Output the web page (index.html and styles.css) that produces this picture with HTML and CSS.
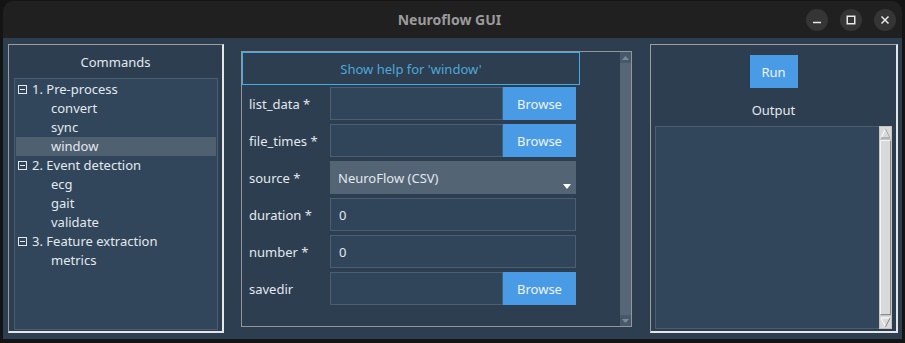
FILE: index.html
```html
<!DOCTYPE html>
<html>
<head>
<meta charset="utf-8">
<title>Neuroflow GUI</title>
<link rel="stylesheet" href="styles.css">
</head>
<body>
<div class="window">
  <div class="titlebar">
    <div></div>
    <div class="title">Neuroflow GUI</div>
    <div class="controls">
      <span class="ctl"><svg width="10" height="10" viewBox="0 0 10 10"><path d="M1 7.5h8" stroke="#e8e8e8" stroke-width="1.5"/></svg></span>
      <span class="ctl"><svg width="10" height="10" viewBox="0 0 10 10"><rect x="1.25" y="1.25" width="7.5" height="7.5" fill="none" stroke="#e8e8e8" stroke-width="1.5"/></svg></span>
      <span class="ctl"><svg width="10" height="10" viewBox="0 0 10 10"><path d="M1.5 1.5l7 7M8.5 1.5l-7 7" stroke="#e8e8e8" stroke-width="1.5"/></svg></span>
    </div>
  </div>
  <div class="content">
    <div class="panel left">
      <div class="panel-title">Commands</div>
      <div class="tree">
        <div class="row group"><span class="minus"></span>1. Pre-process</div>
        <div class="row child">convert</div>
        <div class="row child">sync</div>
        <div class="row child selected">window</div>
        <div class="row group"><span class="minus"></span>2. Event detection</div>
        <div class="row child">ecg</div>
        <div class="row child">gait</div>
        <div class="row child">validate</div>
        <div class="row group"><span class="minus"></span>3. Feature extraction</div>
        <div class="row child">metrics</div>
      </div>
    </div>

    <div class="middle">
      <div class="form-area">
        <div class="help">Show help for 'window'</div>
        <div class="fields">
          <div class="field"><span class="label">list_data *</span><span class="input short"></span><span class="browse">Browse</span></div>
          <div class="field"><span class="label">file_times *</span><span class="input short"></span><span class="browse">Browse</span></div>
          <div class="field"><span class="label">source *</span><span class="combo">NeuroFlow (CSV)<svg class="caret" width="8" height="5" viewBox="0 0 8 5"><path d="M0 0h8L4 5z" fill="#ffffff"/></svg></span></div>
          <div class="field"><span class="label">duration *</span><span class="input long">0</span></div>
          <div class="field"><span class="label">number *</span><span class="input long">0</span></div>
          <div class="field"><span class="label">savedir</span><span class="input short"></span><span class="browse">Browse</span></div>
        </div>
      </div>
      <div class="vscroll">
        <div class="vs-arrow"><svg width="7" height="4" viewBox="0 0 7 4"><path d="M0 4L3.5 0L7 4z" fill="#7a8a99"/></svg></div>
        <div class="vs-thumb"></div>
        <div class="vs-arrow"><svg width="7" height="4" viewBox="0 0 7 4"><path d="M0 0h7L3.5 4z" fill="#7a8a99"/></svg></div>
      </div>
    </div>

    <div class="panel right">
      <div class="run">Run</div>
      <div class="output-label">Output</div>
      <div class="output">
        <div class="out-text"></div>
        <div class="classic-scroll">
          <div class="cs-btn"><svg width="11" height="11" viewBox="0 0 11 11"><path d="M5.5 1L10 10H1z" fill="#d9d9d9" stroke="#ffffff" stroke-width="1"/><path d="M10 10H1" stroke="#7a7a7a"/><path d="M5.5 1L10 10" stroke="#9a9a9a"/></svg></div>
          <div class="cs-trough"></div>
          <div class="cs-btn"><svg width="11" height="11" viewBox="0 0 11 11"><path d="M1 1h9L5.5 10z" fill="#d9d9d9" stroke="#ffffff" stroke-width="1"/><path d="M10 1L5.5 10" stroke="#7a7a7a"/></svg></div>
        </div>
      </div>
    </div>
  </div>
</div>
</body>
</html>
```

FILE: styles.css
```css
* { box-sizing: border-box; }
html, body { margin: 0; padding: 0; }
body {
  background: #141414;
  font-family: "Noto Sans", "Open Sans", sans-serif;
  font-size: 13px;
  color: #e3e8ee;
  width: 905px;
  height: 343px;
  overflow: hidden;
  padding-top: 1px;
}
.window {
  margin-left: 3px;
  width: 899px;
  border-radius: 10px 10px 0 0;
  overflow: hidden;
}
.titlebar {
  height: 37px;
  background: #202020;
  display: grid;
  grid-template-columns: 1fr auto 1fr;
  align-items: center;
  padding-right: 6px;
}
.title {
  font-weight: bold;
  font-size: 14px;
  color: #9b9b9b;
}
.controls {
  display: flex;
  justify-content: flex-end;
  gap: 12px;
}
.ctl {
  width: 22px;
  height: 22px;
  border-radius: 50%;
  background: #353535;
  display: flex;
  align-items: center;
  justify-content: center;
}
.content {
  height: 301px;
  background: #2c3e50;
  display: flex;
  align-items: flex-start;
  padding: 6px 4px 0 5px;
}
.panel {
  height: 289px;
  border-top: 1px solid #9c9c9c;
  border-left: 1px solid #9c9c9c;
  border-right: 2px solid #e6e6e6;
  border-bottom: 2px solid #e6e6e6;
}
.left {
  width: 216px;
  display: flex;
  flex-direction: column;
}
.panel-title {
  text-align: center;
  line-height: 18px;
  padding-top: 8px;
}
.tree {
  margin: 7px 0 0 5px;
  width: 204px;
  height: 252px;
  background: #31465b;
  border: 1px solid #4a5d6f;
  padding-top: 1px;
}
.row {
  height: 19px;
  line-height: 19px;
  margin: 0 1px;
  display: flex;
  align-items: center;
  white-space: nowrap;
}
.group { padding-left: 2px; }
.child { padding-left: 35px; }
.selected { background: #4f6070; }
.minus {
  width: 9px;
  height: 9px;
  border: 1px solid #e3e8ee;
  margin-right: 5px;
  position: relative;
  display: inline-block;
}
.minus::after {
  content: "";
  position: absolute;
  left: 1px;
  right: 1px;
  top: 3px;
  height: 1px;
  background: #e3e8ee;
}
.middle {
  margin: 7px 0 0 17px;
  width: 391px;
  height: 276px;
  border: 1px solid #959595;
  display: flex;
}
.form-area {
  width: 378px;
}
.help {
  width: 338px;
  height: 33px;
  border: 1px solid #3daee9;
  color: #4ea8d8;
  display: flex;
  align-items: center;
  justify-content: center;
}
.fields {
  display: flex;
  flex-direction: column;
  gap: 4px;
  margin-top: 2px;
  padding-left: 7px;
}
.field {
  display: flex;
  height: 33px;
  align-items: stretch;
}
.label {
  width: 81px;
  display: flex;
  align-items: center;
  white-space: nowrap;
}
.input {
  background: #30455a;
  border: 1px solid #4c5e70;
  display: flex;
  align-items: center;
  padding-left: 8px;
}
.short { width: 173px; }
.long { width: 246px; }
.browse {
  width: 73px;
  background: #4a9be6;
  color: #eef4fa;
  display: flex;
  align-items: center;
  justify-content: center;
}
.combo {
  width: 246px;
  background: #536475;
  display: flex;
  align-items: center;
  padding-left: 8px;
  position: relative;
}
.caret {
  position: absolute;
  right: 5px;
  bottom: 5px;
}
.vscroll {
  width: 11px;
  margin-left: 0;
  background: #526374;
  display: flex;
  flex-direction: column;
}
.vs-arrow {
  height: 11px;
  background: #46586a;
  display: flex;
  align-items: center;
  justify-content: center;
}
.vs-thumb { flex: 1; background: #556677; }
.right {
  margin-left: 18px;
  width: 248px;
  display: flex;
  flex-direction: column;
  align-items: center;
}
.run {
  margin-top: 10px;
  width: 48px;
  height: 33px;
  background: #4a9be6;
  color: #eef4fa;
  display: flex;
  align-items: center;
  justify-content: center;
}
.output-label {
  margin-top: 13px;
  line-height: 18px;
}
.output {
  align-self: flex-start;
  margin: 7px 0 0 4px;
  width: 237px;
  height: 203px;
  background: #31465b;
  border: 1px solid #4a5d6f;
  display: flex;
}
.out-text { flex: 1; }
.classic-scroll {
  width: 13px;
  margin: -1px -1px -1px 0;
  background: #c4c4c4;
  display: flex;
  flex-direction: column;
  padding: 1px;
}
.cs-btn {
  height: 12px;
  background: #d9d9d9;
  display: flex;
  align-items: center;
  justify-content: center;
}
.cs-trough {
  flex: 1;
  margin: 1px 0;
  background: #d9d9d9;
  border-top: 1px solid #f4f4f4;
  border-left: 1px solid #f4f4f4;
  border-right: 1px solid #8a8a8a;
  border-bottom: 1px solid #8a8a8a;
}
```
